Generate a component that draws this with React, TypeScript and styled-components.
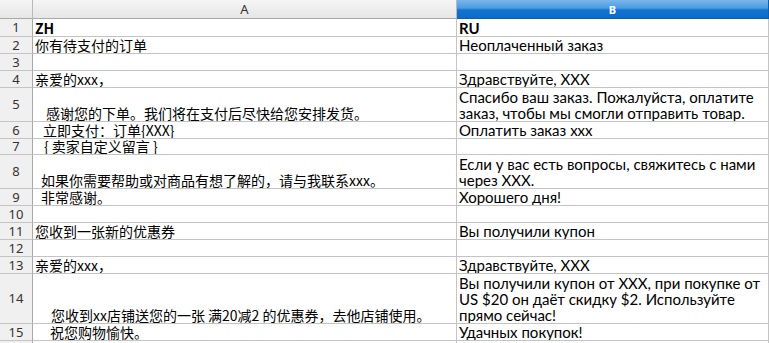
import React from 'react';
import styled, { createGlobalStyle } from 'styled-components';

const GlobalStyle = createGlobalStyle`
  html, body {
    margin: 0;
    padding: 0;
    background: #ffffff;
    overflow: hidden;
  }
  * {
    box-sizing: border-box;
  }
`;

const Sheet = styled.div`
  display: grid;
  grid-template-columns: 33px 424px 312px 40px;
  width: 769px;
  height: 343px;
  overflow: hidden;
  background: #ffffff;
`;

const ColHead = styled.div<{ active?: boolean }>`
  height: 19px;
  display: flex;
  align-items: center;
  justify-content: center;
  border-right: 1px solid ${({ active }) => (active ? '#0a5fb0' : '#b9b9b9')};
  border-bottom: 1px solid ${({ active }) => (active ? '#0a5fb0' : '#a9a9a9')};
  background: ${({ active }) =>
    active
      ? 'linear-gradient(#79b6ea 0%, #4d9be0 45%, #1473d0 55%, #0d6cc9 100%)'
      : 'linear-gradient(#f5f5f5, #e6e6e6)'};
  color: ${({ active }) => (active ? '#ffffff' : '#333333')};
  font-family: 'Noto Sans', 'DejaVu Sans', sans-serif;
  font-size: ${({ active }) => (active ? '11px' : '13px')};
  font-weight: ${({ active }) => (active ? 700 : 400)};
  line-height: 15px;
`;

const RowHead = styled.div<{ h: number }>`
  height: ${({ h }) => h}px;
  display: flex;
  align-items: center;
  justify-content: center;
  background: #f0f0f0;
  border-right: 1px solid #a9a9a9;
  border-bottom: 1px solid #c4c4c4;
  color: #333333;
  font-family: 'Noto Sans', 'DejaVu Sans', sans-serif;
  font-size: 13px;
  line-height: 15px;
`;

const Cell = styled.div<{ h: number; indent?: number; lang?: string; bold?: boolean }>`
  height: ${({ h }) => h}px;
  display: flex;
  align-items: flex-end;
  padding: 0 2px 0 ${({ indent }) => 2 + (indent || 0)}px;
  border-right: 1px solid #c4c4c4;
  border-bottom: 1px solid #c4c4c4;
  color: #000000;
  font-family: ${({ lang }) =>
    lang === 'zh'
      ? "'Noto Sans CJK SC', 'Noto Sans', sans-serif"
      : "Lato, 'Noto Sans', sans-serif"};
  font-size: ${({ lang }) => (lang === 'zh' ? '14px' : '15px')};
  font-weight: ${({ bold }) => (bold ? 700 : 400)};
  line-height: ${({ lang }) => (lang === 'zh' ? '15px' : '16px')};
  overflow: hidden;
  white-space: ${({ lang }) => (lang === 'zh' ? 'nowrap' : 'normal')};
`;

const CellText = styled.span`
  display: block;
`;

type Row = {
  h: number;
  zh: string;
  ru: string;
  indent?: number;
  bold?: boolean;
};

const rows: Row[] = [
  { h: 18, zh: 'ZH', ru: 'RU', bold: true },
  { h: 17, zh: '你有待支付的订单', ru: 'Неоплаченный заказ' },
  { h: 17, zh: '', ru: '' },
  { h: 17, zh: '亲爱的xxx，', ru: 'Здравствуйте, XXX' },
  {
    h: 34,
    zh: '感谢您的下单。我们将在支付后尽快给您安排发货。',
    ru: 'Спасибо ваш заказ. Пожалуйста, оплатите заказ, чтобы мы смогли отправить товар.',
    indent: 11,
  },
  { h: 17, zh: '立即支付：订单{XXX}', ru: 'Оплатить заказ xxx', indent: 8 },
  { h: 16, zh: '{ 卖家自定义留言 }', ru: '', indent: 9 },
  {
    h: 34,
    zh: '如果你需要帮助或对商品有想了解的，请与我联系xxx。',
    ru: 'Если у вас есть вопросы, свяжитесь с нами через XXX.',
    indent: 6,
  },
  { h: 17, zh: '非常感谢。', ru: 'Хорошего дня!', indent: 6 },
  { h: 17, zh: '', ru: '' },
  { h: 17, zh: '您收到一张新的优惠券', ru: 'Вы получили купон' },
  { h: 17, zh: '', ru: '' },
  { h: 17, zh: '亲爱的xxx，', ru: 'Здравствуйте, XXX' },
  {
    h: 50,
    zh: '您收到xx店铺送您的一张 满20减2 的优惠券，去他店铺使用。',
    ru: 'Вы получили купон от XXX, при покупке от US $20 он даёт скидку $2. Используйте прямо сейчас!',
    indent: 16,
  },
  { h: 17, zh: '祝您购物愉快。', ru: 'Удачных покупок!', indent: 15 },
  { h: 17, zh: '', ru: '' },
];

function App() {
  return (
    <>
      <GlobalStyle />
      <Sheet>
        <ColHead />
        <ColHead>A</ColHead>
        <ColHead active>B</ColHead>
        <ColHead />
        {rows.map((row, i) => (
          <React.Fragment key={i}>
            <RowHead h={row.h}>{i + 1}</RowHead>
            <Cell h={row.h} lang="zh" indent={row.indent} bold={row.bold}>
              <CellText>{row.zh}</CellText>
            </Cell>
            <Cell h={row.h} lang="ru" bold={row.bold}>
              <CellText>{row.ru}</CellText>
            </Cell>
            <Cell h={row.h} lang="ru" />
          </React.Fragment>
        ))}
      </Sheet>
    </>
  );
}

export default App;
